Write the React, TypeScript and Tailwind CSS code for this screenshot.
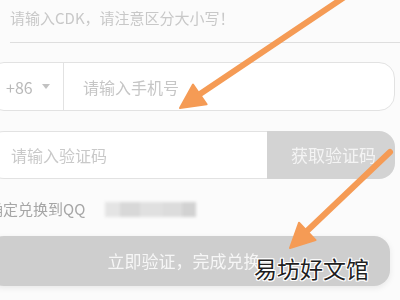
import React from 'react';

const Arrows: React.FC = () => (
    <svg className="absolute inset-0 pointer-events-none" width="400" height="300" viewBox="0 0 400 300">
        <g fill="#f59b55" stroke="#f59b55" strokeLinecap="round" strokeLinejoin="round">
            <line x1="346" y1="-4" x2="200" y2="94" strokeWidth="6" />
            <polygon points="180,108 206.6,104.3 193,84.5" strokeWidth="2" />
            <line x1="390" y1="152" x2="307" y2="231" strokeWidth="6" />
            <polygon points="290,248 315.6,240.1 299,222.8" strokeWidth="2" />
        </g>
    </svg>
);

const App: React.FC = () => {
    return (
        <div className="relative w-[400px] h-[300px] overflow-hidden bg-[#fbfbfb] font-['Noto_Sans_CJK_SC','Noto_Sans',sans-serif]">
            <div className="flex flex-col blur-[0.5px]">
                {/* CDK field */}
                <div className="ml-[10px] h-[43px] pt-[8px] border-b border-[#dedede]">
                    <p className="text-[15px] leading-[20px] text-[#c8c8c8] whitespace-nowrap">请输入CDK，请注意区分大小写！</p>
                </div>

                {/* phone */}
                <div className="mt-[19px] -ml-[12px] w-[407px] h-[49px] flex items-center rounded-[16px] border border-[#e2e2e2] bg-white">
                    <div className="w-[75px] h-full flex items-center pl-[17px] border-r border-[#e2e2e2]">
                        <span className="text-[16px] text-[#b9b9b9]">+86</span>
                        <span className="ml-[9px] w-0 h-0 border-x-[4px] border-x-transparent border-t-[5px] border-t-[#c2c2c2]" />
                    </div>
                    <span className="pl-[19px] text-[16px] text-[#c6c6c6]">请输入手机号</span>
                </div>

                {/* code */}
                <div className="mt-[20px] -ml-[12px] w-[407px] h-[48px] flex">
                    <div className="w-[279px] h-full flex items-center pl-[22px] rounded-l-[16px] border border-r-0 border-[#e2e2e2] bg-white">
                        <span className="text-[16px] text-[#c9c9c9]">请输入验证码</span>
                    </div>
                    <div className="flex-1 h-full flex items-center pl-[24px] rounded-r-[16px] bg-[#d3d3d3]">
                        <span className="text-[17px] text-[#f4f4f4]">获取验证码</span>
                    </div>
                </div>

                {/* account line */}
                <div className="mt-[20px] -ml-[12px] h-[20px] flex items-center">
                    <span className="text-[15px] leading-[20px] text-[#a6a6a6] whitespace-nowrap">确定兑换到QQ</span>
                    <div className="ml-[20px] flex h-[15px] blur-[1.5px]">
                        <div className="w-[15px] bg-[#e4e4e4]" />
                        <div className="w-[20px] bg-[#d8d8d8]" />
                        <div className="w-[22px] bg-[#e0e0e0]" />
                        <div className="w-[20px] bg-[#dcdcdc]" />
                        <div className="w-[14px] bg-[#d2d2d2]" />
                    </div>
                </div>

                {/* submit */}
                <div className="mt-[17px] -ml-[12px] w-[402px] h-[50px] flex items-center justify-center pr-[10px] rounded-[16px] bg-[#cecece] shadow-[0_2px_6px_rgba(0,0,0,0.08)]">
                    <span className="text-[17px] text-[#f6f6f6] whitespace-nowrap">立即验证，完成兑换</span>
                </div>
            </div>

            <Arrows />

            <div className="absolute left-[254px] top-[253px] text-[23px] leading-[30px] text-[#1f1f1f] whitespace-nowrap [text-shadow:1px_1px_0_#fff,-1px_-1px_0_#fff,1px_-1px_0_#fff,-1px_1px_0_#fff,0_1px_0_#fff,0_-1px_0_#fff,1px_0_0_#fff,-1px_0_0_#fff]">
                易坊好文馆
            </div>
        </div>
    );
};

export default App;
